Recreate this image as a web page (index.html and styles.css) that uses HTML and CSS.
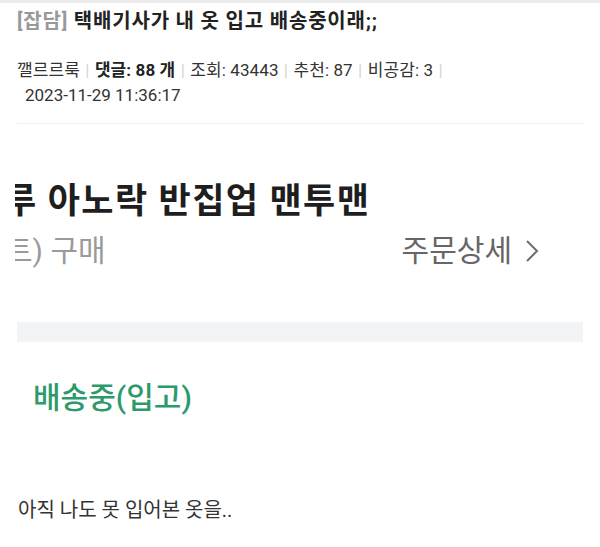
FILE: index.html
```html
<!DOCTYPE html>
<html lang="ko">
<head>
    <meta charset="UTF-8">
    <meta name="viewport" content="width=device-width, initial-scale=1.0">
    <title>택배기사가 내 옷 입고 배송중이래;;</title>
    <link rel="stylesheet" href="styles.css">
</head>
<body>
    <div class="topband"></div>

    <div class="post-head">
        <h1 class="post-title"><span class="category">[잡담]</span> 택배기사가 내 옷 입고 배송중이래;;</h1>
        <div class="post-meta">
            깰르르룩 <span class="sep">|</span>
            <b>댓글: 88 개</b> <span class="sep">|</span>
            조회: 43443 <span class="sep">|</span>
            추천: 87 <span class="sep">|</span>
            비공감: 3 <span class="sep">|</span>
        </div>
        <div class="post-date">2023-11-29 11:36:17</div>
    </div>

    <div class="post-body">
        <div class="capture">
            <div class="product-name"><span class="cut">루 </span>아노락 반집업 맨투맨</div>
            <div class="product-row">
                <span class="option"><span class="cut-small">트) </span>구매</span>
                <span class="detail-link">주문상세
                    <svg class="chevron" width="14" height="24" viewBox="0 0 14 24">
                        <path d="M2 2 L12 12 L2 22" fill="none" stroke="#6e6e6e" stroke-width="2"/>
                    </svg>
                </span>
            </div>
            <div class="gray-bar"></div>
            <div class="status">배송중(입고)</div>
        </div>

        <p class="comment">아직 나도 못 입어본 옷을..</p>
    </div>
</body>
</html>
```

FILE: styles.css
```css
body {
    margin: 0;
    background: #fff;
    font-family: Roboto, "Noto Sans CJK KR", sans-serif;
    color: #222;
}
.topband {
    height: 3px;
    background: #ececec;
}
.post-head {
    margin: 0 16px 0 17px;
    padding-top: 5px;
    padding-bottom: 15px;
    border-bottom: 1px solid #f0f0f0;
}
.post-title {
    margin: 0;
    font-size: 20px;
    line-height: 27px;
    font-weight: bold;
    letter-spacing: 0.8px;
    color: #222;
}
.category {
    color: #999;
}
.post-meta {
    margin-top: 23px;
    font-size: 17px;
    line-height: 25px;
    letter-spacing: 0.1px;
    color: #333;
}
.post-meta b {
    color: #222;
}
.sep {
    margin: 0 1px;
    color: #d4d4d4;
}
.post-date {
    padding-left: 8px;
    font-size: 17px;
    line-height: 25px;
    color: #333;
}
.capture {
    margin: 0 17px 0 15px;
    overflow: hidden;
}
.product-name {
    margin-top: 57px;
    font-size: 35px;
    line-height: 42px;
    font-weight: bold;
    letter-spacing: 1.4px;
    color: #1e1e1e;
    white-space: nowrap;
}
.cut {
    margin-left: -11px;
}
.product-row {
    margin-top: 9px;
    display: flex;
    justify-content: space-between;
    align-items: center;
    padding-right: 44px;
    font-size: 30px;
    line-height: 38px;
    white-space: nowrap;
}
.option {
    color: #9a9a9a;
}
.cut-small {
    margin-left: -10px;
}
.detail-link {
    display: flex;
    align-items: center;
    gap: 13px;
    color: #666;
}
.chevron {
    display: block;
}
.gray-bar {
    margin: 52px 0 0 2px;
    height: 20px;
    background: #f3f4f6;
}
.status {
    margin-top: 37px;
    padding-left: 18px;
    font-size: 30px;
    line-height: 38px;
    font-weight: 500;
    color: #2e9a6c;
}
.comment {
    margin: 79px 0 0 18px;
    font-size: 20px;
    line-height: 28px;
    color: #333;
}
```
